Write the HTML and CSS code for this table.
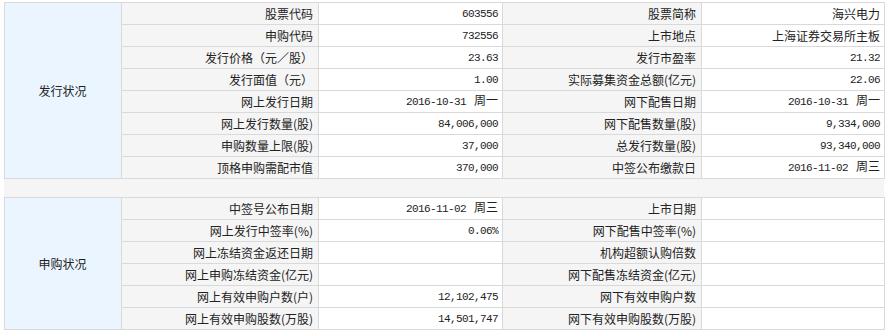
FILE: index.html
```html
<!DOCTYPE html>
<html lang="zh-CN">
<head>
<meta charset="utf-8">
<title>新股申购</title>
<link rel="stylesheet" href="styles.css">
</head>
<body>
<div class="page">
<table class="info">
  <colgroup><col class="c1"><col class="c2"><col class="c3"><col class="c4"><col class="c5"></colgroup>
  <tr><td class="group" rowspan="8">发行状况</td><td class="lbl">股票代码</td><td class="val num">603556</td><td class="lbl">股票简称</td><td class="val">海兴电力</td></tr>
  <tr><td class="lbl">申购代码</td><td class="val num">732556</td><td class="lbl">上市地点</td><td class="val">上海证券交易所主板</td></tr>
  <tr><td class="lbl">发行价格（元／股）</td><td class="val num">23.63</td><td class="lbl">发行市盈率</td><td class="val num">21.32</td></tr>
  <tr><td class="lbl">发行面值（元）</td><td class="val num">1.00</td><td class="lbl">实际募集资金总额(亿元)</td><td class="val num">22.06</td></tr>
  <tr><td class="lbl">网上发行日期</td><td class="val num">2016-10-31 <span class="cjk">周一</span></td><td class="lbl">网下配售日期</td><td class="val num">2016-10-31 <span class="cjk">周一</span></td></tr>
  <tr><td class="lbl">网上发行数量(股)</td><td class="val num">84,006,000</td><td class="lbl">网下配售数量(股)</td><td class="val num">9,334,000</td></tr>
  <tr><td class="lbl">申购数量上限(股)</td><td class="val num">37,000</td><td class="lbl">总发行数量(股)</td><td class="val num">93,340,000</td></tr>
  <tr><td class="lbl">顶格申购需配市值</td><td class="val num">370,000</td><td class="lbl">中签公布缴款日</td><td class="val num">2016-11-02 <span class="cjk">周三</span></td></tr>
</table>
<div class="gap"></div>
<table class="info">
  <colgroup><col class="c1"><col class="c2"><col class="c3"><col class="c4"><col class="c5"></colgroup>
  <tr><td class="group" rowspan="6">申购状况</td><td class="lbl">中签号公布日期</td><td class="val num">2016-11-02 <span class="cjk">周三</span></td><td class="lbl">上市日期</td><td class="val"></td></tr>
  <tr><td class="lbl">网上发行中签率(%)</td><td class="val num">0.06%</td><td class="lbl">网下配售中签率(%)</td><td class="val"></td></tr>
  <tr><td class="lbl">网上冻结资金返还日期</td><td class="val"></td><td class="lbl">机构超额认购倍数</td><td class="val"></td></tr>
  <tr><td class="lbl">网上申购冻结资金(亿元)</td><td class="val"></td><td class="lbl">网下配售冻结资金(亿元)</td><td class="val"></td></tr>
  <tr><td class="lbl">网上有效申购户数(户)</td><td class="val num">12,102,475</td><td class="lbl">网下有效申购户数</td><td class="val"></td></tr>
  <tr><td class="lbl">网上有效申购股数(万股)</td><td class="val num">14,501,747</td><td class="lbl">网下有效申购股数(万股)</td><td class="val"></td></tr>
</table>
</div>
</body>
</html>
```
FILE: styles.css
```css
html, body {
  margin: 0;
  padding: 0;
  background: #ffffff;
}
.page {
  padding: 2px 4px 0 4px;
  width: 880px;
}
.info {
  border-collapse: collapse;
  table-layout: fixed;
  width: 880px;
  font-family: "Noto Sans CJK SC", "Liberation Sans", sans-serif;
  font-size: 12px;
  color: #222222;
}
.c1 { width: 117px; }
.c2 { width: 197px; }
.c3 { width: 184px; }
.c4 { width: 199px; }
.c5 { width: 183px; }
.info td {
  border: 1px solid #d9d9d9;
  height: 22px;
  padding: 0 5px 0 4px;
  line-height: 20px;
  white-space: nowrap;
  overflow: hidden;
  box-sizing: border-box;
}
.group {
  background: #ebf5ff;
  text-align: center;
}
.lbl {
  background: #f5f5f5;
  text-align: right;
}
.val {
  background: #ffffff;
  text-align: right;
}
.info td.val {
  padding-right: 4px;
}
.num {
  font-family: "Liberation Mono", "Noto Sans CJK SC", monospace;
  font-size: 11px;
  letter-spacing: -0.6px;
  word-spacing: 2px;
}
.num .cjk {
  font-family: "Noto Sans CJK SC", sans-serif;
  font-size: 12px;
  line-height: 1;
  letter-spacing: 0;
}
.gap {
  height: 18px;
  background: #f5f5f5;
}
```
